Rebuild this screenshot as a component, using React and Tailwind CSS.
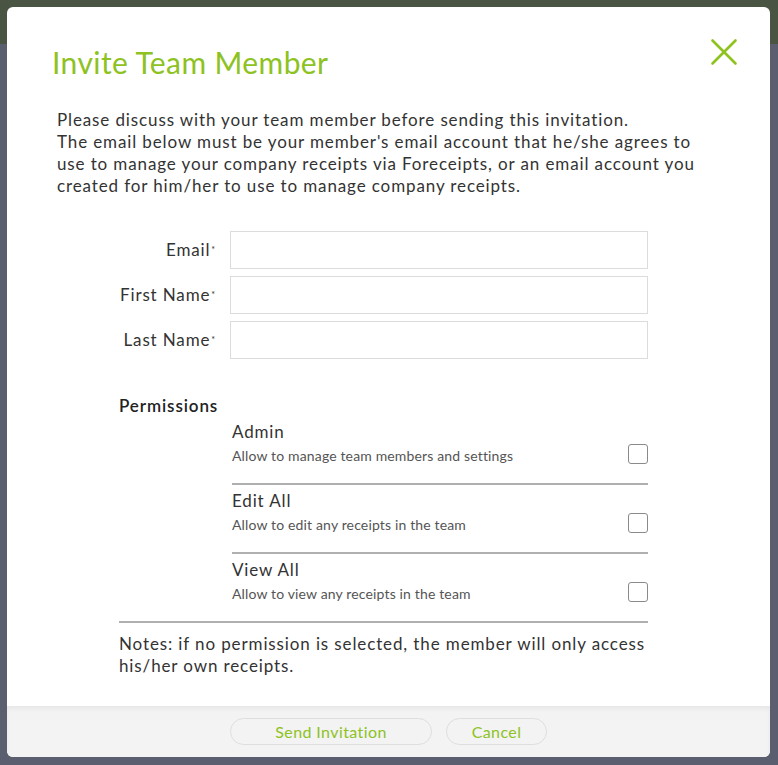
import React from 'react'

const perms = [
  { title: "Admin", desc: "Allow to manage team members and settings" },
  { title: "Edit All", desc: "Allow to edit any receipts in the team" },
  { title: "View All", desc: "Allow to view any receipts in the team" },
]

function Field({ label }) {
  return (
    <div className="flex items-center gap-[14px]">
      <label className="w-[159px] text-right text-[17px] tracking-[0.85px] text-[#333]">
        {label}<sup className="text-[9px] relative top-[-3px] ml-[1px]">*</sup>
      </label>
      <input type="text" className="h-[38px] w-[418px] border border-[#dcdcdc] bg-white outline-none" />
    </div>
  )
}

export default function App() {
  return (
    <div className="relative h-[765px] w-full overflow-hidden bg-[#5b5e6e] font-['Lato',sans-serif]">
      <div className="h-[44px] bg-[#4a5443]"></div>

      <div className="absolute left-[7px] top-[7px] flex h-[750px] w-[763px] flex-col overflow-hidden rounded-[6px] bg-white">
        <div className="flex items-start justify-between pl-[45px] pr-[32px] pt-[35px]">
          <h1 className="text-[30px] leading-[40px] tracking-[0.4px] text-[#8dc21f]">Invite Team Member</h1>
          <button className="mt-[-4px] text-[#8dc21f]">
            <svg width="28" height="28" viewBox="0 0 28 28" fill="none" stroke="currentColor" strokeWidth="2.6" strokeLinecap="round">
              <path d="M2.5 2.5 L25.5 25.5 M25.5 2.5 L2.5 25.5" />
            </svg>
          </button>
        </div>

        <div className="flex-1 px-[50px] pt-[27px]">
          <p className="text-[17px] leading-[22px] tracking-[0.88px] text-[#333]">
            Please discuss with your team member before sending this invitation.<br />
            The email below must be your member's email account that he/she agrees to use to manage your company receipts via Foreceipts, or an email account you created for him/her to use to manage company receipts.
          </p>

          <div className="mt-[34px] flex flex-col gap-[7px]">
            <Field label="Email" />
            <Field label="First Name" />
            <Field label="Last Name" />
          </div>

          <div className="ml-[62px] mt-[36px] w-[529px]">
            <h2 className="text-[17px] font-semibold leading-[22px] tracking-[0.9px] text-[#222]">Permissions</h2>
            <div className="ml-[113px] mt-[3px]">
              {perms.map((p, i) => (
                <div key={p.title} className={"flex items-end justify-between pb-[17px] " + (i < 2 ? "mb-[4px] border-b-2 border-[#b0b0b0]" : "")}>
                  <div>
                    <div className="text-[17px] leading-[24px] tracking-[0.85px] text-[#333]">{p.title}</div>
                    <div className="mt-[2px] text-[14px] leading-[20px] tracking-[0.15px] text-[#555]">{p.desc}</div>
                  </div>
                  <span className="mb-[2px] h-[20px] w-[20px] rounded-[3px] border border-[#8a8a8a] bg-white"></span>
                </div>
              ))}
            </div>
            <div className="border-b-2 border-[#b0b0b0]"></div>
            <p className="mt-[10px] text-[17px] leading-[22px] tracking-[0.88px] text-[#333]">
              Notes: if no permission is selected, the member will only access his/her own receipts.
            </p>
          </div>
        </div>

        <div className="flex h-[51px] items-center justify-center gap-[14px] bg-[#f3f3f3] shadow-[inset_0_3px_4px_rgba(0,0,0,0.05)]">
          <button className="h-[27px] w-[202px] rounded-full border border-[#dedede] text-[16px] tracking-[0.4px] text-[#8dc21f]">Send Invitation</button>
          <button className="h-[27px] w-[101px] rounded-full border border-[#dedede] text-[16px] tracking-[0.4px] text-[#8dc21f]">Cancel</button>
        </div>
      </div>
    </div>
  )
}
